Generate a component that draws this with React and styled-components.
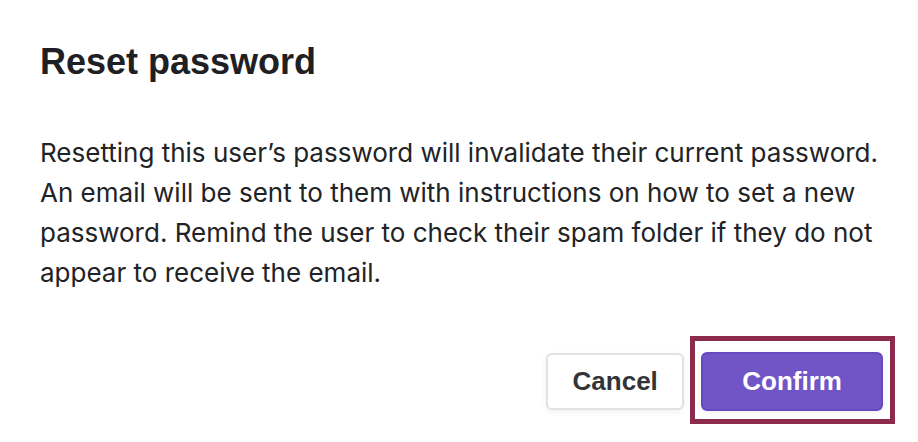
import React from 'react';
import styled, { createGlobalStyle } from 'styled-components';

const GlobalStyle = createGlobalStyle`
  html, body {
    margin: 0;
    padding: 0;
    background: #ffffff;
  }
`

const Dialog = styled.div`
  box-sizing: border-box;
  width: 918px;
  height: 442px;
  padding: 41px 35px 0 40px;
  display: flex;
  flex-direction: column;
  background: #ffffff;
`

const Title = styled.h2`
  margin: 0;
  font-family: "Liberation Sans", Arial, sans-serif;
  font-weight: 700;
  font-size: 36px;
  line-height: 42px;
  color: #1f2023;
`

const Body = styled.p`
  margin: 50px 0 0;
  font-family: Inter, "Noto Sans", sans-serif;
  font-size: 26px;
  line-height: 40px;
  color: #222326;
`

const Actions = styled.div`
  display: flex;
  justify-content: flex-end;
  align-items: center;
  gap: 17px;
  margin-top: 59px;
`

const Button = styled.button`
  position: relative;
  box-sizing: border-box;
  height: ${p => (p.$primary ? '59px' : '57px')};
  padding: 0 ${p => (p.$primary ? '39px' : '24.5px')};
  border-radius: 6px;
  font-family: "Liberation Sans", Arial, sans-serif;
  font-weight: 700;
  font-size: 26px;
  cursor: pointer;
  border: 2px solid ${p => (p.$primary ? '#6848c0' : '#e1e1e6')};
  background: ${p => (p.$primary ? '#7155c6' : '#ffffff')};
  color: ${p => (p.$primary ? '#ffffff' : '#333438')};
  box-shadow: 0 2px 6px rgba(0, 0, 0, 0.06);
  ${p => p.$focused && `
    &::after {
      content: '';
      position: absolute;
      top: -18px;
      bottom: -15px;
      left: -13px;
      right: -14px;
      border: 5px solid #8d2b4f;
      pointer-events: none;
    }
  `}
`

export default function App() {
  return (
    <>
      <GlobalStyle />
      <Dialog>
        <Title>Reset password</Title>
        <Body>
          Resetting this user’s password will invalidate their current password.
          An email will be sent to them with instructions on how to set a new
          password. Remind the user to check their spam folder if they do not
          appear to receive the email.
        </Body>
        <Actions>
          <Button>Cancel</Button>
          <Button $primary $focused>Confirm</Button>
        </Actions>
      </Dialog>
    </>
  );
}
